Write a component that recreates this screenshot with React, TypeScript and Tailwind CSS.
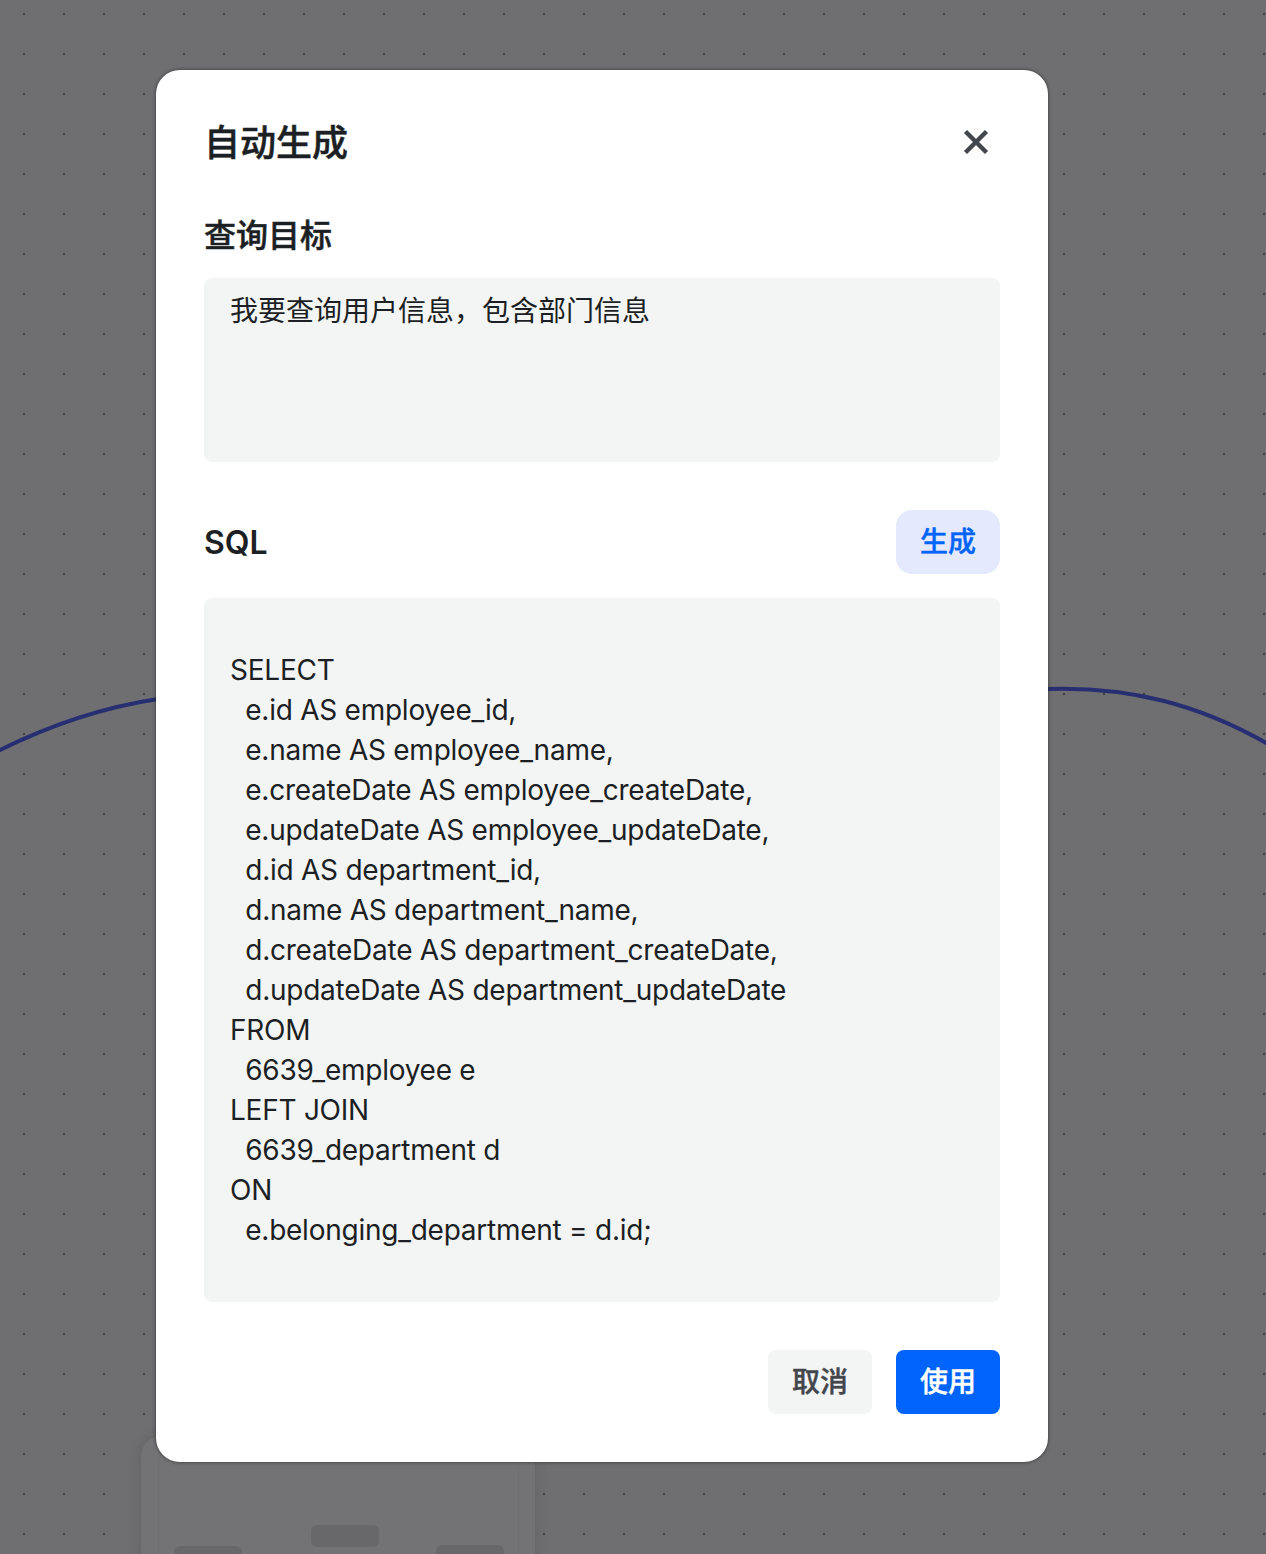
const sql = `
SELECT
  e.id AS employee_id,
  e.name AS employee_name,
  e.createDate AS employee_createDate,
  e.updateDate AS employee_updateDate,
  d.id AS department_id,
  d.name AS department_name,
  d.createDate AS department_createDate,
  d.updateDate AS department_updateDate
FROM
  6639_employee e
LEFT JOIN
  6639_department d
ON
  e.belonging_department = d.id;`;

const App = () => {
  return (
    <div className="relative w-[1266px] h-[1554px] overflow-hidden bg-[#6f6f71] font-['Inter','Noto_Sans_CJK_SC',sans-serif]">
      {/* canvas dots */}
      <div className="absolute inset-0 bg-[radial-gradient(circle,#434345_1.3px,transparent_1.6px)] bg-[length:40px_40px] bg-[position:4px_-6px]" />

      {/* edge between nodes */}
      <svg className="absolute inset-0" width="1266" height="1554" fill="none">
        <path d="M-2 751C50 725 105 707 158 699" stroke="#272f72" strokeWidth="4" />
        <path d="M1046 689C1130 686 1200 705 1268 744" stroke="#272f72" strokeWidth="4" />
      </svg>

      {/* node behind the modal */}
      <div className="absolute left-[141px] top-[1436px] w-[394px] h-[140px] rounded-[20px] border-2 border-[#727274] bg-[#737375] pt-4 pl-[15px] pr-[14px] shadow-[0_0_12px_rgba(60,60,60,0.25)]">
        <div className="relative h-full rounded-lg border border-[#6f6f71]">
          <div className="absolute left-[152px] top-[70px] w-[68px] h-[22px] rounded-md bg-[#68686a]" />
          <div className="absolute left-[15px] top-[91px] w-[68px] h-[22px] rounded-md bg-[#68686a]" />
          <div className="absolute left-[277px] top-[90px] w-[68px] h-[22px] rounded-md bg-[#68686a]" />
        </div>
      </div>

      {/* modal */}
      <div className="absolute left-[156px] top-[70px] w-[892px] h-[1392px] rounded-3xl bg-white px-12 pt-12 shadow-[0_0_3px_1px_rgba(40,40,40,0.5)]">
        <div className="flex items-center justify-between h-12">
          <h1 className="text-[36px] leading-[48px] font-medium [-webkit-text-stroke:0.5px_currentColor] text-[#1c1f23] translate-y-px">自动生成</h1>
          <svg width="48" height="48" viewBox="0 0 48 48" fill="none">
            <path d="M13.5 13.5L34.5 34.5M34.5 13.5L13.5 34.5" stroke="#43474c" strokeWidth="4.5" />
          </svg>
        </div>

        <div className="mt-[47px] text-[32px] leading-[44px] font-medium [-webkit-text-stroke:0.5px_currentColor] text-[#1c1f23] translate-y-px">查询目标</div>
        <div className="mt-[21px] h-[184px] rounded-lg bg-[#f3f5f5] px-[26px] pt-[13px] text-[28px] leading-10 text-[#1c1f23] whitespace-pre-wrap">
          我要查询用户信息，包含部门信息
        </div>

        <div className="mt-12 flex items-center justify-between h-16">
          <div className="text-[32px] leading-[44px] font-semibold text-[#1c1f23] translate-y-px">SQL</div>
          <button className="w-[104px] h-16 rounded-2xl bg-[#e5e9fd] text-[28px] font-medium [-webkit-text-stroke:0.4px_currentColor] text-[#0064fa]">生成</button>
        </div>
        <div className="mt-6 h-[704px] rounded-lg bg-[#f3f5f5] px-[26px] pt-3 text-[28px] leading-10 tracking-[-0.25px] text-[#1c1f23] whitespace-pre-wrap">
          {sql}
        </div>

        <div className="mt-12 flex justify-end gap-6">
          <button className="w-[104px] h-16 rounded-lg bg-[#f3f5f5] text-[28px] font-medium [-webkit-text-stroke:0.4px_currentColor] text-[#43474c]">取消</button>
          <button className="w-[104px] h-16 rounded-lg bg-[#0064fa] text-[28px] font-medium [-webkit-text-stroke:0.4px_currentColor] text-white">使用</button>
        </div>
      </div>
    </div>
  );
};

export default App;
